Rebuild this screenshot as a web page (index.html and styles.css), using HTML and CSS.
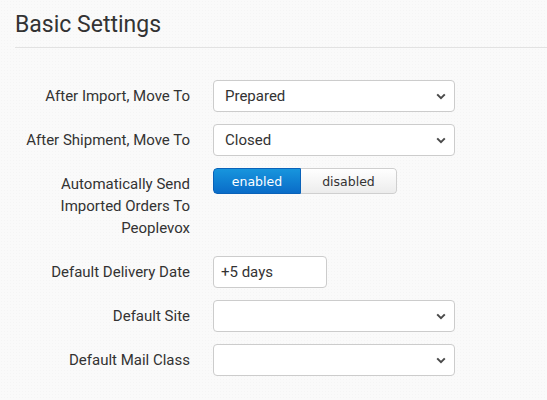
FILE: index.html
```html
<!DOCTYPE html>
<html>
<head>
<meta charset="utf-8">
<link rel="stylesheet" href="styles.css">
</head>
<body>
<div class="page">
  <h2 class="title">Basic Settings</h2>
  <div class="form">
    <label class="label">After Import, Move To</label>
    <div class="select-wrap">
      <select class="select"><option>Prepared</option></select>
      <svg class="chev" width="10" height="7" viewBox="0 0 10 7"><path d="M1.2 1.4 L5 5.2 L8.8 1.4" fill="none" stroke="#4a4a4a" stroke-width="2"/></svg>
    </div>

    <label class="label">After Shipment, Move To</label>
    <div class="select-wrap">
      <select class="select"><option>Closed</option></select>
      <svg class="chev" width="10" height="7" viewBox="0 0 10 7"><path d="M1.2 1.4 L5 5.2 L8.8 1.4" fill="none" stroke="#4a4a4a" stroke-width="2"/></svg>
    </div>

    <label class="label">Automatically Send Imported Orders To Peoplevox</label>
    <div class="toggle-cell">
      <div class="toggle">
        <span class="opt on">enabled</span>
        <span class="opt off">disabled</span>
      </div>
    </div>

    <label class="label">Default Delivery Date</label>
    <div><input class="text" type="text" value="+5 days"></div>

    <label class="label">Default Site</label>
    <div class="select-wrap">
      <select class="select"><option></option></select>
      <svg class="chev" width="10" height="7" viewBox="0 0 10 7"><path d="M1.2 1.4 L5 5.2 L8.8 1.4" fill="none" stroke="#4a4a4a" stroke-width="2"/></svg>
    </div>

    <label class="label">Default Mail Class</label>
    <div class="select-wrap">
      <select class="select"><option></option></select>
      <svg class="chev" width="10" height="7" viewBox="0 0 10 7"><path d="M1.2 1.4 L5 5.2 L8.8 1.4" fill="none" stroke="#4a4a4a" stroke-width="2"/></svg>
    </div>
  </div>
</div>
</body>
</html>
```
FILE: styles.css
```css
html, body {
  margin: 0;
  padding: 0;
  background-color: #fafafa;
  background-image:
    radial-gradient(rgba(0,0,0,0.018) 1px, transparent 1px);
  background-size: 3px 3px;
  font-family: Roboto, "Liberation Sans", sans-serif;
  color: #333;
  height: 400px;
  overflow: hidden;
}
.page {
  padding-top: 11px;
}
.title {
  margin: 0 0 0 15px;
  font-size: 23px;
  font-weight: 400;
  line-height: 28px;
  color: #333;
  padding-bottom: 8px;
  border-bottom: 1px solid #e2e2e2;
}
.form {
  margin: 32px 0 0 15px;
  display: grid;
  grid-template-columns: 175px 242px;
  column-gap: 23px;
  row-gap: 12px;
  align-items: start;
}
.label {
  text-align: right;
  font-size: 15px;
  line-height: 22px;
  padding: 5px 0;
  color: #333;
}
.select-wrap {
  position: relative;
  height: 32px;
}
.select {
  appearance: none;
  -webkit-appearance: none;
  width: 242px;
  height: 32px;
  box-sizing: border-box;
  border: 1px solid #cccccc;
  border-radius: 4px;
  background: #fff;
  font-family: Roboto, "Liberation Sans", sans-serif;
  font-size: 15px;
  color: #333;
  padding: 0 0 0 11px;
  margin: 0;
}
.chev {
  position: absolute;
  right: 9px;
  top: 13px;
}
.toggle {
  display: inline-flex;
  height: 26px;
  box-sizing: border-box;
  border-radius: 4px;
  overflow: hidden;
  font-family: "DejaVu Sans", Verdana, sans-serif;
  font-size: 12.5px;
}
.opt {
  display: flex;
  align-items: center;
  justify-content: center;
  box-sizing: border-box;
}
.opt.on {
  width: 88px;
  color: #fff;
  background: linear-gradient(#1795dd, #0a6cc8);
  border: 1px solid #0a62b8;
  border-radius: 4px 0 0 4px;
}
.opt.off {
  width: 96px;
  color: #333;
  background: linear-gradient(#ffffff, #ececec);
  border: 1px solid #cfcfcf;
  border-left: none;
  border-radius: 0 4px 4px 0;
}
.text {
  width: 114px;
  height: 32px;
  box-sizing: border-box;
  border: 1px solid #cccccc;
  border-radius: 4px;
  background: #fff;
  font-family: Roboto, "Liberation Sans", sans-serif;
  font-size: 15px;
  color: #333;
  padding: 0 0 0 7px;
  margin: 0;
}
```
